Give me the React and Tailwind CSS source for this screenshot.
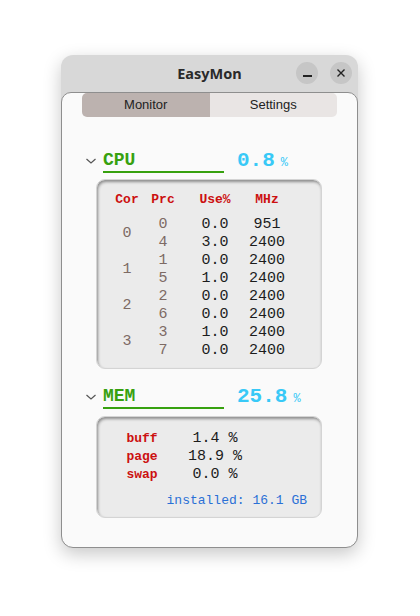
import { useState } from "react";

const mono = "font-['Liberation_Mono','DejaVu_Sans_Mono',monospace]";

const cores = [
  { core: 0, rows: [[0, "0.0", "951"], [4, "3.0", "2400"]] },
  { core: 1, rows: [[1, "0.0", "2400"], [5, "1.0", "2400"]] },
  { core: 2, rows: [[2, "0.0", "2400"], [6, "0.0", "2400"]] },
  { core: 3, rows: [[3, "1.0", "2400"], [7, "0.0", "2400"]] },
];

const mem = [
  ["buff", "1.4 %"],
  ["page", "18.9 %"],
  ["swap", "0.0 %"],
];

function Chevron() {
  return (
    <svg width="12" height="8" viewBox="0 0 12 8" className="mr-[6px]">
      <path d="M1.5 2 L6 6 L10.5 2" fill="none" stroke="#555" strokeWidth="1.2" />
    </svg>
  );
}

function SectionHead({ name, value }) {
  return (
    <div className={`flex items-center pl-[23px] ${mono}`}>
      <Chevron />
      <div className="w-[121px] border-b-2 border-[#37a10f] text-[18px] leading-[21px] font-bold text-[#37a10f]">{name}</div>
      <div className="ml-[13px] text-[21px] leading-[24px] font-bold text-[#38c9f7]">{value}</div>
      <div className="ml-[6px] mt-[3px] text-[12px] text-[#38c9f7]">%</div>
    </div>
  );
}

export default function App() {
  const [tab, setTab] = useState("monitor");

  return (
    <div className="w-[420px] h-[616px] bg-white pt-[55px] pl-[61px]">
      <div className="w-[297px] h-[493px] flex flex-col rounded-[12px] bg-[#d8d8d8] shadow-[0_6px_18px_rgba(0,0,0,0.22)]">
        {/* title bar */}
        <div className="h-[37px] flex items-center relative shrink-0">
          <div className="flex-1 text-center text-[14.5px] font-bold text-[#2a2a2a] font-['Noto_Sans',sans-serif]">EasyMon</div>
          <div className="absolute right-[6px] top-[7px] flex gap-[12px]">
            <button className="w-[22px] h-[22px] rounded-full bg-[#c6c6c6] flex items-center justify-center">
              <span className="block w-[9px] h-[1.5px] bg-[#222] mt-[6px]" />
            </button>
            <button className="w-[22px] h-[22px] rounded-full bg-[#c6c6c6] flex items-center justify-center">
              <svg width="10" height="10" viewBox="0 0 10 10">
                <path d="M1.5 1.5 L8.5 8.5 M8.5 1.5 L1.5 8.5" stroke="#222" strokeWidth="1.4" />
              </svg>
            </button>
          </div>
        </div>

        {/* content */}
        <div className="flex-1 bg-[#fafafa] border border-[#8e8e8e] rounded-[10px] rounded-b-[12px]">
          <div className="mx-[20px] flex h-[24px] text-[13px] font-['Liberation_Sans',Arial,sans-serif] text-[#222]">
            <button onClick={() => setTab("monitor")} className={`flex-1 rounded-l-[5px] ${tab === "monitor" ? "bg-[#bcb2af]" : "bg-[#e9e5e4]"}`}>
              Monitor
            </button>
            <button onClick={() => setTab("settings")} className={`flex-1 rounded-r-[5px] ${tab === "settings" ? "bg-[#bcb2af]" : "bg-[#e9e5e4]"}`}>
              Settings
            </button>
          </div>

          <div className="mt-[32px]">
            <SectionHead name="CPU" value="0.8" />
          </div>

          {/* cpu card */}
          <div className={`ml-[34px] mt-[6px] w-[226px] h-[190px] rounded-[9px] bg-[#ebebeb] border border-[#d4d4d4] shadow-[inset_1px_2px_3px_rgba(0,0,0,0.4)] pt-[12px] ${mono}`}>
            <div className="grid grid-cols-[36px_36px_68px_36px] ml-[12px] text-[13px] leading-[16px] font-bold text-[#cc1010]">
              <div className="text-center">Cor</div>
              <div className="text-center">Prc</div>
              <div className="text-center">Use%</div>
              <div className="text-center">MHz</div>
            </div>
            <div className="grid grid-cols-[36px_36px_68px_36px] ml-[12px] mt-[8px] text-[15px] leading-[18px]">
              {cores.map((c) => [
                <div key={"c" + c.core} className="row-span-2 flex items-center justify-center text-[#7d6a64]">{c.core}</div>,
                ...c.rows.map((r) => [
                  <div key={"p" + r[0]} className="text-center text-[#7d6a64]">{r[0]}</div>,
                  <div key={"u" + r[0]} className="text-center text-[#1c1c1c]">{r[1]}</div>,
                  <div key={"m" + r[0]} className="text-center text-[#1c1c1c]">{r[2]}</div>,
                ]),
              ])}
            </div>
          </div>

          <div className="mt-[16px]">
            <SectionHead name="MEM" value="25.8" />
          </div>

          {/* mem card */}
          <div className={`ml-[34px] mt-[7px] w-[226px] h-[102px] rounded-[9px] bg-[#ebebeb] border border-[#d4d4d4] shadow-[inset_1px_2px_3px_rgba(0,0,0,0.4)] pt-[13px] ${mono}`}>
            <div className="grid grid-cols-[52px_94px] ml-[19px] leading-[18px]">
              {mem.map(([k, v]) => [
                <div key={k} className="text-center text-[13px] font-bold text-[#cc1010]">{k}</div>,
                <div key={k + "v"} className="text-center text-[15px] text-[#1c1c1c]">{v}</div>,
              ])}
            </div>
            <div className="mt-[8px] mr-[14px] text-right text-[13px] leading-[18px] text-[#2a70d6]">installed: 16.1 GB</div>
          </div>
        </div>
      </div>
    </div>
  );
}
